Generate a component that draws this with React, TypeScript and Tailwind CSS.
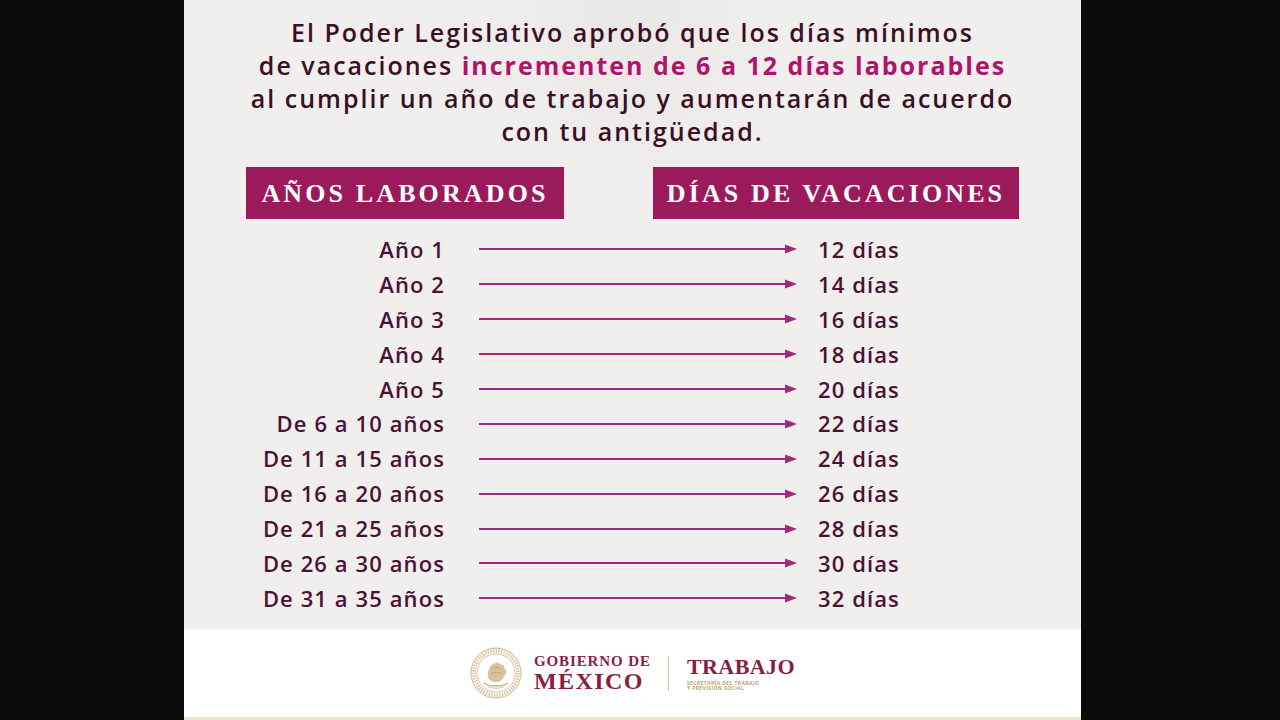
import React from "react";

const rows: [string, string][] = [
  ["Año 1", "12 días"],
  ["Año 2", "14 días"],
  ["Año 3", "16 días"],
  ["Año 4", "18 días"],
  ["Año 5", "20 días"],
  ["De 6 a 10 años", "22 días"],
  ["De 11 a 15 años", "24 días"],
  ["De 16 a 20 años", "26 días"],
  ["De 21 a 25 años", "28 días"],
  ["De 26 a 30 años", "30 días"],
  ["De 31 a 35 años", "32 días"],
];

const sans = "font-['Open_Sans','Noto_Sans',sans-serif]";
const serif = "font-['Liberation_Serif','DejaVu_Serif',serif]";

const Arrow = () => (
  <svg width="318" height="10" viewBox="0 0 318 10" className="block">
    <line x1="0" y1="5" x2="308" y2="5" stroke="#9c2b7a" strokeWidth="2" />
    <path d="M306 0.5 L318 5 L306 9.5 Z" fill="#9c2b7a" />
  </svg>
);

const Emblem = () => (
  <svg width="52" height="52" viewBox="0 0 52 52" className="block">
    <circle cx="26" cy="26" r="25" fill="none" stroke="#cdb88e" strokeWidth="1" />
    <circle cx="26" cy="26" r="19" fill="none" stroke="#cdb88e" strokeWidth="0.8" />
    <circle cx="26" cy="26" r="22" fill="none" stroke="#dccba6" strokeWidth="4" strokeDasharray="1.5 1.2" />
    <path
      d="M18 30 C17 24 20 18 25 16 C27 15 30 16 31 18 C33 17 35 19 34 21 C37 22 37 27 34 29 C33 33 29 35 26 35 C22 35 19 33 18 30 Z"
      fill="#d6c39c"
    />
    <path d="M22 22 C24 20 28 20 30 22 M21 27 C24 25 29 25 32 27" stroke="#b89f6f" strokeWidth="0.9" fill="none" />
    <path d="M14 36 C20 40 32 40 38 36" stroke="#c3ad80" strokeWidth="1.4" fill="none" />
    <path d="M17 39 C22 42 30 42 35 39" stroke="#d6c39c" strokeWidth="1" fill="none" />
  </svg>
);

export default function App() {
  return (
    <div className="flex h-[720px] w-full bg-[#0b0b0b] pl-[184px]">
      <div className="flex w-[897px] flex-col">
        <main className="flex-1 bg-[#f0efed] bg-[radial-gradient(ellipse_at_50%_0%,#e9e8e6_0%,transparent_25%)]">
          <h1
            className={`pt-[16px] text-center text-[25px] font-semibold leading-[33px] tracking-[0.08em] text-[#3a0f26] ${sans}`}
          >
            <span className="block">El Poder Legislativo aprobó que los días mínimos</span>
            <span className="block">
              de vacaciones <span className="font-bold text-[#b0136b]">incrementen de 6 a 12 días laborables</span>
            </span>
            <span className="block">al cumplir un año de trabajo y aumentarán de acuerdo</span>
            <span className="block">con tu antigüedad.</span>
          </h1>

          <div className="mt-[19px] flex pl-[62px]">
            <div
              className={`flex h-[52px] w-[318px] items-center justify-center bg-[#9a1a5c] text-[26px] font-bold tracking-[0.12em] text-white ${serif}`}
            >
              AÑOS LABORADOS
            </div>
            <div
              className={`ml-[89px] flex h-[52px] w-[366px] items-center justify-center bg-[#9a1a5c] text-[26px] font-bold tracking-[0.12em] text-white ${serif}`}
            >
              DÍAS DE VACACIONES
            </div>
          </div>

          <div className={`mt-[13px] flex flex-col text-[22px] font-semibold tracking-[0.05em] text-[#4a1233] ${sans}`}>
            {rows.map(([years, days]) => (
              <div key={years} className="flex h-[34.9px] items-center">
                <span className="w-[261px] text-right">{years}</span>
                <span className="ml-[34px]">
                  <Arrow />
                </span>
                <span className="ml-[21px]">{days}</span>
              </div>
            ))}
          </div>
        </main>

        <footer className="flex h-[91px] items-center justify-center border-b-[3px] border-[#efe3cc] bg-white">
          <Emblem />
          <div className={`ml-[12px] flex flex-col font-bold text-[#8a1e41] ${serif}`}>
            <span className="text-[15px] leading-[16px] tracking-[0.06em]">GOBIERNO DE</span>
            <span className="text-[24px] leading-[24px] tracking-[0.06em]">MÉXICO</span>
          </div>
          <div className="ml-[17px] h-[35px] w-px bg-[#d4c4a0]" />
          <div className="ml-[18px] flex flex-col">
            <span className={`text-[22px] font-bold leading-[24px] tracking-[0.02em] text-[#8a1e41] ${serif}`}>
              TRABAJO
            </span>
            <span className={`mt-[2px] text-[5px] font-bold uppercase leading-[5px] tracking-[0.08em] text-[#b79f72] ${sans}`}>
              Secretaría del Trabajo
            </span>
            <span className={`text-[5px] font-bold uppercase leading-[5px] tracking-[0.08em] text-[#b79f72] ${sans}`}>
              y Previsión Social
            </span>
          </div>
        </footer>
      </div>
    </div>
  );
}
